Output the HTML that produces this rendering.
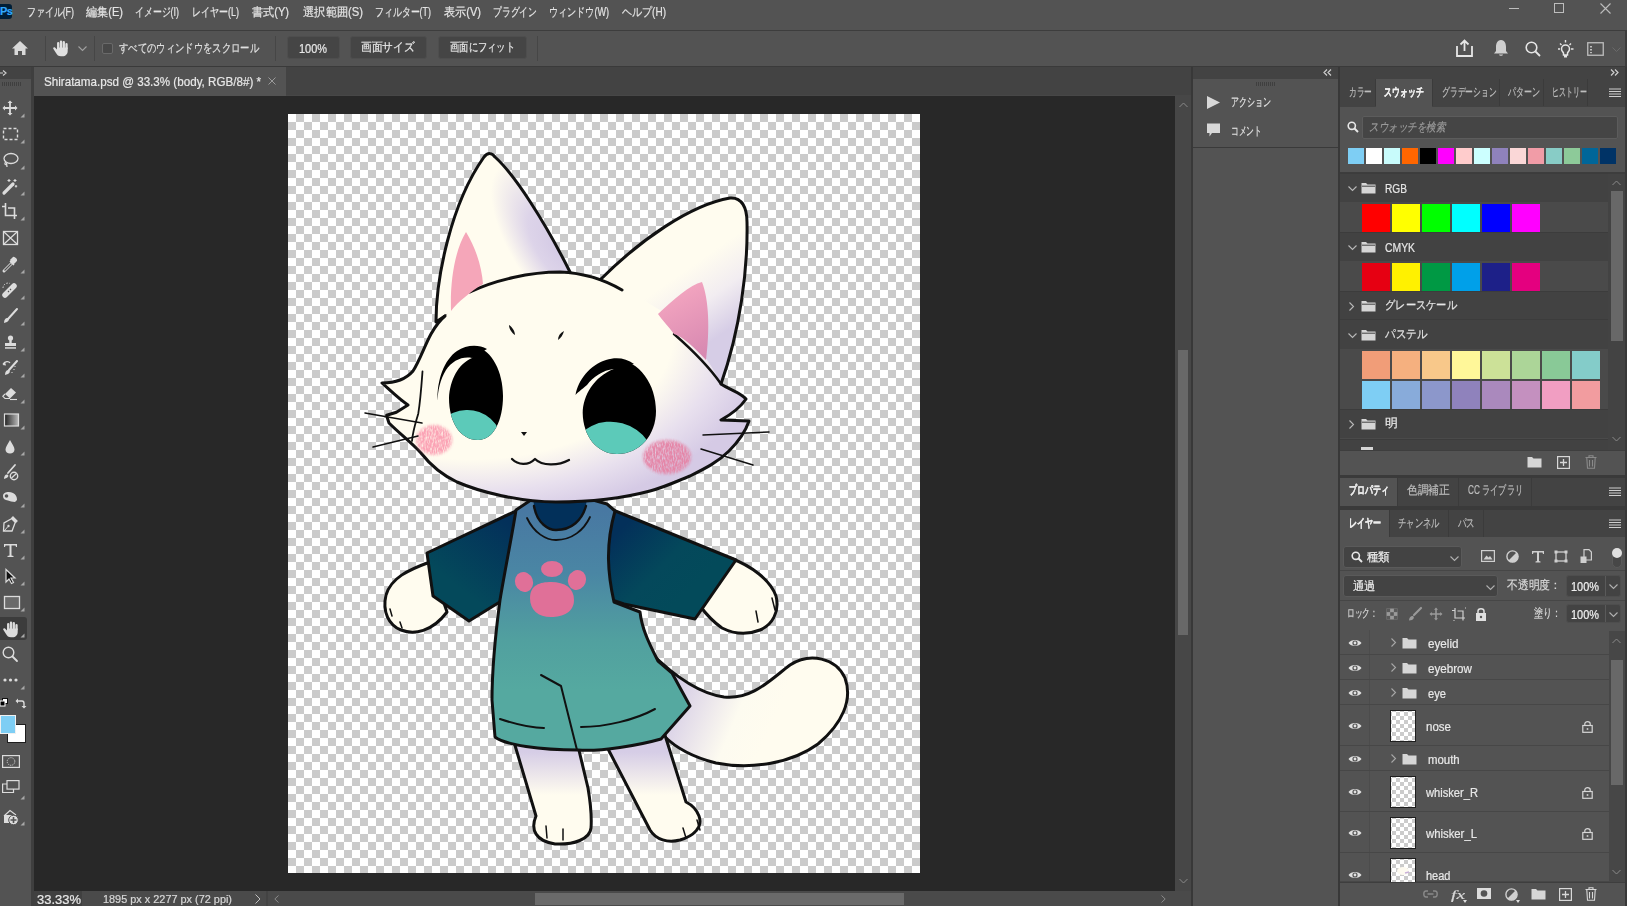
<!DOCTYPE html>
<html><head><meta charset="utf-8">
<style>
*{margin:0;padding:0;box-sizing:border-box}
html,body{width:1627px;height:906px;overflow:hidden;background:#535353;font-family:"Liberation Sans",sans-serif;color:#dcdcdc}
.a{position:absolute}
.t{position:absolute;white-space:nowrap;line-height:1;transform-origin:0 50%;-webkit-text-stroke:0.2px currentColor}
svg{position:absolute;overflow:visible}
</style></head><body>
<div class="a" style="left:0px;top:0px;width:1627px;height:906px;background:#535353;"></div>
<div class="a" style="left:0px;top:30px;width:1627px;height:1px;background:#3d3d3d;"></div>
<div class="a" style="left:1625px;top:31px;width:2px;height:36px;background:#3d3d3d;"></div>
<div class="a" style="left:0px;top:66px;width:1627px;height:1px;background:#3a3a3a;"></div>
<div class="a" style="left:0px;top:67px;width:31px;height:12px;background:#434343;"></div>
<div class="a" style="left:31px;top:67px;width:3px;height:839px;background:#3f3f3f;"></div>
<div class="a" style="left:34px;top:67px;width:1157px;height:29px;background:#434343;"></div>
<div class="a" style="left:34px;top:95px;width:1157px;height:1px;background:#474747;"></div>
<div class="a" style="left:34px;top:67px;width:252px;height:29px;background:#535353;"></div>
<div class="a" style="left:34px;top:96px;width:1141px;height:795px;background:#282828;"></div>
<div class="a" style="left:1175px;top:96px;width:16px;height:795px;background:#474747;"></div>
<div class="a" style="left:1178px;top:350px;width:10px;height:285px;background:#686868;"></div>
<div class="a" style="left:34px;top:891px;width:1157px;height:15px;background:#4a4a4a;"></div>
<div class="a" style="left:34px;top:891px;width:48px;height:15px;background:#404040;"></div>
<div class="a" style="left:266px;top:891px;width:2px;height:15px;background:#434343;"></div>
<div class="a" style="left:535px;top:893px;width:369px;height:12px;background:#6a6a6a;"></div>
<div class="a" style="left:1191px;top:67px;width:2px;height:839px;background:#383838;"></div>
<div class="a" style="left:1193px;top:67px;width:432px;height:12px;background:#434343;"></div>
<div class="a" style="left:1193px;top:147px;width:145px;height:1px;background:#3a3a3a;"></div>
<div class="a" style="left:1338px;top:67px;width:2px;height:839px;background:#383838;"></div>
<div class="a" style="left:1625px;top:67px;width:2px;height:839px;background:#383838;"></div>
<div class="a" style="left:0px;top:4px;width:12px;height:15px;background:#001e36;border-radius:0 3px 3px 0"></div>
<div class="t" style="left:0px;top:6.0px;font-size:11px;color:#31a8ff;font-weight:bold;letter-spacing:-0.5px">Ps</div>
<div class="t" style="left:27px;top:5.5px;font-size:12px;color:#e4e4e4;--w:47;transform:scaleX(0.7422);">ファイル(F)</div>
<div class="t" style="left:86px;top:5.5px;font-size:12px;color:#e4e4e4;--w:37;transform:scaleX(0.9250);">編集(E)</div>
<div class="t" style="left:135px;top:5.5px;font-size:12px;color:#e4e4e4;--w:44;transform:scaleX(0.7416);">イメージ(I)</div>
<div class="t" style="left:192px;top:5.5px;font-size:12px;color:#e4e4e4;--w:47;transform:scaleX(0.7499);">レイヤー(L)</div>
<div class="t" style="left:252px;top:5.5px;font-size:12px;color:#e4e4e4;--w:37;transform:scaleX(0.9250);">書式(Y)</div>
<div class="t" style="left:303px;top:5.5px;font-size:12px;color:#e4e4e4;--w:60;transform:scaleX(0.9375);">選択範囲(S)</div>
<div class="t" style="left:375px;top:5.5px;font-size:12px;color:#e4e4e4;--w:56;transform:scaleX(0.7434);">フィルター(T)</div>
<div class="t" style="left:444px;top:5.5px;font-size:12px;color:#e4e4e4;--w:37;transform:scaleX(0.9250);">表示(V)</div>
<div class="t" style="left:493px;top:5.5px;font-size:12px;color:#e4e4e4;--w:44;transform:scaleX(0.7333);">プラグイン</div>
<div class="t" style="left:549px;top:5.5px;font-size:12px;color:#e4e4e4;--w:60;transform:scaleX(0.7564);">ウィンドウ(W)</div>
<div class="t" style="left:622px;top:5.5px;font-size:12px;color:#e4e4e4;--w:44;transform:scaleX(0.8354);">ヘルプ(H)</div>
<div class="a" style="left:1509px;top:8px;width:10px;height:1px;background:#bdbdbd;"></div>
<div class="a" style="left:1554px;top:3px;width:10px;height:10px;background:transparent;border:1px solid #bdbdbd"></div>
<svg style="left:1600px;top:3px" width="11" height="11" viewBox="0 0 11 11"><path d="M0.5,0.5 L10.5,10.5 M10.5,0.5 L0.5,10.5" stroke="#bdbdbd" stroke-width="1.1"/></svg>
<svg style="left:11px;top:40px" width="18" height="16" viewBox="0 0 18 16"><path d="M9,1 L1,8.5 L3.5,8.5 L3.5,15 L7,15 L7,11 L11,11 L11,15 L14.5,15 L14.5,8.5 L17,8.5 Z" fill="#d9d9d9"/></svg>
<div class="a" style="left:45px;top:36px;width:1px;height:25px;background:#464646;"></div>
<svg style="left:52px;top:39px" width="18" height="18" viewBox="0 0 18 18"><g fill="none" stroke="#e0e0e0" stroke-width="2.3" stroke-linecap="round"><path d="M6.2,9 L6.2,4.2 M9,8.5 L9,2.6 M11.8,8.5 L11.8,3.2 M14.5,9.5 L14.5,5.2"/></g><path d="M5,8.5 L15.7,8.5 L15.7,12 C15.7,15.2 13.5,17.3 10.5,17.3 L9,17.3 C6.5,17.3 5,16 4,14 L1.3,9.8 C0.7,8.8 1.9,7.8 3,8.6 L5,10.5 Z" fill="#e0e0e0"/></svg>
<svg style="left:78px;top:46px" width="9" height="6" viewBox="0 0 9 6"><path d="M0.5,0.5 L4.5,4.5 L8.5,0.5" fill="none" stroke="#a0a0a0" stroke-width="1.1"/></svg>
<div class="a" style="left:94px;top:36px;width:1px;height:25px;background:#464646;"></div>
<div class="a" style="left:102px;top:43px;width:11px;height:11px;background:#484848;border:1px solid #6a6a6a;border-radius:2px"></div>
<div class="t" style="left:119px;top:41.5px;font-size:12px;color:#e0e0e0;--w:140;transform:scaleX(0.7778);">すべてのウィンドウをスクロール</div>
<div class="a" style="left:275px;top:36px;width:1px;height:25px;background:#464646;"></div>
<div class="a" style="left:287px;top:36px;width:53px;height:23px;background:#454545;border:1px solid #4e4e4e;border-radius:3px"></div>
<div class="t" style="left:299px;top:42.5px;font-size:12px;color:#e8e8e8;--w:28;transform:scaleX(0.9120);">100%</div>
<div class="a" style="left:350px;top:36px;width:77px;height:23px;background:#454545;border:1px solid #4e4e4e;border-radius:3px"></div>
<div class="t" style="left:361px;top:41.0px;font-size:12px;color:#e8e8e8;--w:53.5;transform:scaleX(0.8917);">画面サイズ</div>
<div class="a" style="left:438px;top:36px;width:89px;height:23px;background:#454545;border:1px solid #4e4e4e;border-radius:3px"></div>
<div class="t" style="left:449.5px;top:41.0px;font-size:12px;color:#e8e8e8;--w:65;transform:scaleX(0.7738);">画面にフィット</div>
<div class="a" style="left:537px;top:36px;width:1px;height:25px;background:#464646;"></div>
<svg style="left:1455px;top:38px" width="20" height="20" viewBox="0 0 20 20"><path d="M2,8 L2,18 L17,18 L17,8 M9.5,13 L9.5,2.5 M5.5,6.5 L9.5,2.5 L13.5,6.5" fill="none" stroke="#e6e6e6" stroke-width="1.8"/></svg>
<svg style="left:1493px;top:39px" width="16" height="18" viewBox="0 0 16 18"><path d="M8,1 C4,1 3,5 3,8 L3,12 L1,14.5 L15,14.5 L13,12 L13,8 C13,5 12,1 8,1 Z M6,15.5 C6,17.2 10,17.2 10,15.5 Z" fill="#cfcfcf"/></svg>
<svg style="left:1525px;top:41px" width="16" height="16" viewBox="0 0 16 16"><circle cx="6.5" cy="6.5" r="5.3" fill="none" stroke="#e6e6e6" stroke-width="1.6"/><path d="M10.5,10.5 L15,15" stroke="#e6e6e6" stroke-width="1.8"/></svg>
<svg style="left:1556px;top:39px" width="19" height="19" viewBox="0 0 19 19"><path d="M9.5,6 C7,6 5.5,8 5.5,10 C5.5,12 7,13 7.5,14 L7.5,16 L11.5,16 L11.5,14 C12,13 13.5,12 13.5,10 C13.5,8 12,6 9.5,6 Z" fill="none" stroke="#e6e6e6" stroke-width="1.5"/><path d="M9.5,1 L9.5,3.5 M2,10 L4,10 M15,10 L17.5,10 M4,4.5 L5.5,6 M15,4.5 L13.5,6" stroke="#e6e6e6" stroke-width="1.4"/><rect x="8" y="16" width="3" height="2.5" fill="#e6e6e6"/></svg>
<svg style="left:1587px;top:42px" width="18" height="15" viewBox="0 0 18 15"><rect x="0.75" y="0.75" width="15.5" height="12.5" fill="none" stroke="#bdbdbd" stroke-width="1.3"/><rect x="3" y="4" width="2" height="1.5" fill="#bdbdbd"/><rect x="3" y="7" width="2" height="1.5" fill="#bdbdbd"/><rect x="3" y="10" width="2" height="1.2" fill="#bdbdbd"/></svg>
<svg style="left:1612px;top:47px" width="9" height="6" viewBox="0 0 9 6"><path d="M0.5,0.5 L4.5,4.5 L8.5,0.5" fill="none" stroke="#6a6a6a" stroke-width="1"/></svg>
<div class="t" style="left:44px;top:75.0px;font-size:13px;color:#e8e8e8;--w:217;transform:scaleX(0.8940);">Shiratama.psd @ 33.3% (body, RGB/8#) *</div>
<svg style="left:268px;top:77px" width="8" height="8" viewBox="0 0 8 8"><path d="M0.5,0.5 L7.5,7.5 M7.5,0.5 L0.5,7.5" stroke="#9a9a9a" stroke-width="1"/></svg>
<svg style="left:0px;top:69px" width="8" height="8" viewBox="0 0 8 8"><path d="M0,4 L3,4 M3,1.5 L6,4 L3,6.5" fill="none" stroke="#cfcfcf" stroke-width="1.2"/></svg>
<div class="a" style="left:2px;top:82px;width:19px;height:4px;background:repeating-linear-gradient(90deg,#3f3f3f 0 1px,transparent 1px 2px);"></div>
<div class="t" style="left:37px;top:893.5px;font-size:12px;color:#e8e8e8;--w:44;transform:scaleX(1.0810);">33.33%</div>
<div class="t" style="left:103px;top:894.0px;font-size:11px;color:#d8d8d8;--w:129;transform:scaleX(0.9903);">1895 px x 2277 px (72 ppi)</div>
<svg style="left:255px;top:894px" width="6" height="10" viewBox="0 0 6 10"><path d="M0.5,0.5 L5,5 L0.5,9.5" fill="none" stroke="#c0c0c0" stroke-width="1"/></svg>
<svg style="left:274px;top:895px" width="5" height="8" viewBox="0 0 5 8"><path d="M4.5,0.5 L0.8,4 L4.5,7.5" fill="none" stroke="#8a8a8a" stroke-width="1"/></svg>
<svg style="left:1161px;top:895px" width="5" height="8" viewBox="0 0 5 8"><path d="M0.5,0.5 L4.2,4 L0.5,7.5" fill="none" stroke="#8a8a8a" stroke-width="1"/></svg>
<svg style="left:1179px;top:102px" width="9" height="6" viewBox="0 0 9 6"><path d="M0.5,5 L4.5,1 L8.5,5" fill="none" stroke="#8a8a8a" stroke-width="1"/></svg>
<svg style="left:1179px;top:878px" width="9" height="6" viewBox="0 0 9 6"><path d="M0.5,1 L4.5,5 L8.5,1" fill="none" stroke="#8a8a8a" stroke-width="1"/></svg>
<div class="a" style="left:0px;top:617px;width:27px;height:23px;background:#3c3c3c;border-radius:0 3px 3px 0"></div>
<svg style="left:2px;top:100px" width="18" height="18" viewBox="0 0 18 18"><path d="M8,0.5 L10.5,3 L8.9,3 L8.9,7.1 L13,7.1 L13,5.5 L15.5,8 L13,10.5 L13,8.9 L8.9,8.9 L8.9,13 L10.5,13 L8,15.5 L5.5,13 L7.1,13 L7.1,8.9 L3,8.9 L3,10.5 L0.5,8 L3,5.5 L3,7.1 L7.1,7.1 L7.1,3 L5.5,3 Z" fill="#dcdcdc"/></svg>
<svg style="left:20px;top:113px" width="5" height="5" viewBox="0 0 5 5"><path d="M4.5,0.5 L4.5,4.5 L0.5,4.5 Z" fill="#a8a8a8"/></svg>
<svg style="left:2px;top:126px" width="18" height="18" viewBox="0 0 18 18"><rect x="1.5" y="2.5" width="14" height="11" fill="none" stroke="#dcdcdc" stroke-width="1.4" stroke-dasharray="3 2"/></svg>
<svg style="left:20px;top:139px" width="5" height="5" viewBox="0 0 5 5"><path d="M4.5,0.5 L4.5,4.5 L0.5,4.5 Z" fill="#a8a8a8"/></svg>
<svg style="left:2px;top:152px" width="18" height="18" viewBox="0 0 18 18"><ellipse cx="9" cy="6.5" rx="7" ry="5" fill="none" stroke="#dcdcdc" stroke-width="1.3"/><path d="M4,10 C2,11 3,14 5,12 M4.5,11 L5,15" fill="none" stroke="#dcdcdc" stroke-width="1.3"/></svg>
<svg style="left:20px;top:165px" width="5" height="5" viewBox="0 0 5 5"><path d="M4.5,0.5 L4.5,4.5 L0.5,4.5 Z" fill="#a8a8a8"/></svg>
<svg style="left:2px;top:178px" width="18" height="18" viewBox="0 0 18 18"><path d="M2,15 L11,6" stroke="#dcdcdc" stroke-width="3.2" stroke-linecap="round"/><path d="M7,1 L7,4 M5.5,2.5 L8.5,2.5 M13,1 L13,4 M11.5,2.5 L14.5,2.5 M14,7 L14,9.5 M12.8,8.2 L15.2,8.2" stroke="#dcdcdc" stroke-width="1.1"/></svg>
<svg style="left:20px;top:191px" width="5" height="5" viewBox="0 0 5 5"><path d="M4.5,0.5 L4.5,4.5 L0.5,4.5 Z" fill="#a8a8a8"/></svg>
<svg style="left:2px;top:203px" width="18" height="18" viewBox="0 0 18 18"><path d="M0,3.5 L3.5,3.5 M3.5,0 L3.5,12.5 L15,12.5 M12.5,16 L12.5,5 L6,5" fill="none" stroke="#dcdcdc" stroke-width="1.6"/></svg>
<svg style="left:20px;top:216px" width="5" height="5" viewBox="0 0 5 5"><path d="M4.5,0.5 L4.5,4.5 L0.5,4.5 Z" fill="#a8a8a8"/></svg>
<svg style="left:2px;top:230px" width="18" height="18" viewBox="0 0 18 18"><rect x="1.5" y="1.5" width="14" height="13" fill="none" stroke="#dcdcdc" stroke-width="1.3"/><path d="M1.5,1.5 L15.5,14.5 M15.5,1.5 L1.5,14.5" stroke="#dcdcdc" stroke-width="1.2"/></svg>
<svg style="left:2px;top:256px" width="18" height="18" viewBox="0 0 18 18"><path d="M2,15 L10,7" stroke="#dcdcdc" stroke-width="3" stroke-linecap="round" fill="none"/><path d="M2.5,14.5 L9.5,7.5" stroke="#535353" stroke-width="1.2"/><path d="M8,5 L12,9 M11,2 C12,0.5 15.5,4 14,5 L12,7 L9,4 Z" fill="#dcdcdc" stroke="#dcdcdc" stroke-width="1.5"/></svg>
<svg style="left:20px;top:269px" width="5" height="5" viewBox="0 0 5 5"><path d="M4.5,0.5 L4.5,4.5 L0.5,4.5 Z" fill="#a8a8a8"/></svg>
<svg style="left:2px;top:282px" width="18" height="18" viewBox="0 0 18 18"><path d="M3,13 L12,4" stroke="#dcdcdc" stroke-width="5.5" stroke-linecap="round"/><path d="M6,9 L7,10 M8,7 L9,8" stroke="#535353" stroke-width="1.2"/><path d="M1,6 A5,5 0 0 1 8,1.5" fill="none" stroke="#dcdcdc" stroke-width="1" stroke-dasharray="1.5 1.5"/></svg>
<svg style="left:20px;top:295px" width="5" height="5" viewBox="0 0 5 5"><path d="M4.5,0.5 L4.5,4.5 L0.5,4.5 Z" fill="#a8a8a8"/></svg>
<svg style="left:2px;top:308px" width="18" height="18" viewBox="0 0 18 18"><path d="M15,1 L6,11" stroke="#dcdcdc" stroke-width="2" stroke-linecap="round"/><path d="M2,15 C2,11 4,9.5 6,10 C7.5,11 7,13 5,14 Z" fill="#dcdcdc"/></svg>
<svg style="left:20px;top:321px" width="5" height="5" viewBox="0 0 5 5"><path d="M4.5,0.5 L4.5,4.5 L0.5,4.5 Z" fill="#a8a8a8"/></svg>
<svg style="left:2px;top:334px" width="18" height="18" viewBox="0 0 18 18"><circle cx="8.5" cy="4" r="2.6" fill="#dcdcdc"/><path d="M7.3,6 L9.7,6 L9.7,9 L14,9 L14,12 L3,12 L3,9 L7.3,9 Z" fill="#dcdcdc"/><rect x="3" y="13.2" width="11" height="1.5" fill="#dcdcdc"/></svg>
<svg style="left:20px;top:347px" width="5" height="5" viewBox="0 0 5 5"><path d="M4.5,0.5 L4.5,4.5 L0.5,4.5 Z" fill="#a8a8a8"/></svg>
<svg style="left:2px;top:360px" width="18" height="18" viewBox="0 0 18 18"><path d="M15,1 L7,10" stroke="#dcdcdc" stroke-width="2" stroke-linecap="round"/><path d="M3,15 C3,11 5,9.5 7,10 C8.5,11 8,13 6,14 Z" fill="#dcdcdc"/><path d="M1,4 C3,1 7,1 8,3" fill="none" stroke="#dcdcdc" stroke-width="1.1"/><path d="M0.5,5 L3,2 L4,5.5 Z" fill="#dcdcdc"/><path d="M13,6 L13,7 M12,9 L12,10 M10,12 L10,13" stroke="#dcdcdc" stroke-width="1"/></svg>
<svg style="left:20px;top:373px" width="5" height="5" viewBox="0 0 5 5"><path d="M4.5,0.5 L4.5,4.5 L0.5,4.5 Z" fill="#a8a8a8"/></svg>
<svg style="left:2px;top:386px" width="18" height="18" viewBox="0 0 18 18"><path d="M9,2 L14,6.5 L8,12.5 L3,8 Z" fill="#dcdcdc"/><path d="M3,8 L0.8,10.3 L3,12.5 L8,12.5" fill="none" stroke="#dcdcdc" stroke-width="1.1"/><path d="M8,13.5 L15,13.5" stroke="#dcdcdc" stroke-width="1.1"/></svg>
<svg style="left:20px;top:399px" width="5" height="5" viewBox="0 0 5 5"><path d="M4.5,0.5 L4.5,4.5 L0.5,4.5 Z" fill="#a8a8a8"/></svg>
<svg style="left:2px;top:412px" width="18" height="18" viewBox="0 0 18 18"><defs><linearGradient id="tg" x1="0" x2="1"><stop offset="0" stop-color="#222"/><stop offset="1" stop-color="#bbb"/></linearGradient></defs><rect x="2.5" y="2" width="14" height="12" fill="url(#tg)" stroke="#dcdcdc" stroke-width="1.2"/></svg>
<svg style="left:20px;top:425px" width="5" height="5" viewBox="0 0 5 5"><path d="M4.5,0.5 L4.5,4.5 L0.5,4.5 Z" fill="#a8a8a8"/></svg>
<svg style="left:2px;top:438px" width="18" height="18" viewBox="0 0 18 18"><path d="M8,2 C6,6 3.5,9 3.5,11.5 C3.5,14 5.5,15.5 8,15.5 C10.5,15.5 12.5,14 12.5,11.5 C12.5,9 10,6 8,2 Z" fill="#dcdcdc"/></svg>
<svg style="left:20px;top:451px" width="5" height="5" viewBox="0 0 5 5"><path d="M4.5,0.5 L4.5,4.5 L0.5,4.5 Z" fill="#a8a8a8"/></svg>
<svg style="left:2px;top:464px" width="18" height="18" viewBox="0 0 18 18"><path d="M13,1 L6,9" stroke="#dcdcdc" stroke-width="1.8" stroke-linecap="round"/><path d="M2,15 C2,12 3.5,10 5.5,10.5 C7,11.5 6.5,13 4.5,14 Z" fill="#dcdcdc"/><circle cx="12" cy="12" r="3.7" fill="none" stroke="#dcdcdc" stroke-width="1.4"/><path d="M9.5,14 L14.5,9.5" stroke="#dcdcdc" stroke-width="1.3"/></svg>
<svg style="left:2px;top:490px" width="18" height="18" viewBox="0 0 18 18"><path d="M1,6 C1,2 7,1 11,3 C14,4.5 15,7 15,10 L13,12 C10,12 8,11 6,10.5 C3,10 1,9 1,6 Z" fill="#dcdcdc"/><circle cx="4.5" cy="6" r="1.8" fill="#535353"/></svg>
<svg style="left:20px;top:503px" width="5" height="5" viewBox="0 0 5 5"><path d="M4.5,0.5 L4.5,4.5 L0.5,4.5 Z" fill="#a8a8a8"/></svg>
<svg style="left:2px;top:516px" width="18" height="18" viewBox="0 0 18 18"><path d="M11,1 L15,5 L13,7 L10,15 L1.5,15 L2,7 L9,3 Z" fill="none" stroke="#dcdcdc" stroke-width="1.3"/><path d="M11,1 L15,5 L13,7 L9,3 Z" fill="#dcdcdc"/><circle cx="6.5" cy="10" r="1.2" fill="#dcdcdc"/><path d="M2,15 L6,10.5" stroke="#dcdcdc" stroke-width="1"/></svg>
<svg style="left:20px;top:529px" width="5" height="5" viewBox="0 0 5 5"><path d="M4.5,0.5 L4.5,4.5 L0.5,4.5 Z" fill="#a8a8a8"/></svg>
<svg style="left:2px;top:542px" width="18" height="18" viewBox="0 0 18 18"><path d="M2,2 L15,2 L15,5 L14,5 L13.5,3.5 L9.5,3.5 L9.5,13.5 L11.5,14 L11.5,15 L5.5,15 L5.5,14 L7.5,13.5 L7.5,3.5 L3.5,3.5 L3,5 L2,5 Z" fill="#dcdcdc"/></svg>
<svg style="left:20px;top:555px" width="5" height="5" viewBox="0 0 5 5"><path d="M4.5,0.5 L4.5,4.5 L0.5,4.5 Z" fill="#a8a8a8"/></svg>
<svg style="left:2px;top:568px" width="18" height="18" viewBox="0 0 18 18"><path d="M4,1.5 L4,14 L7,11 L9.5,15.5 L11.5,14.5 L9,10 L13,10 Z" fill="#111" stroke="#dcdcdc" stroke-width="1.2"/></svg>
<svg style="left:20px;top:581px" width="5" height="5" viewBox="0 0 5 5"><path d="M4.5,0.5 L4.5,4.5 L0.5,4.5 Z" fill="#a8a8a8"/></svg>
<svg style="left:2px;top:594px" width="18" height="18" viewBox="0 0 18 18"><rect x="2.5" y="2.5" width="15" height="12" fill="#6a6a6a" stroke="#dcdcdc" stroke-width="1.3"/></svg>
<svg style="left:20px;top:607px" width="5" height="5" viewBox="0 0 5 5"><path d="M4.5,0.5 L4.5,4.5 L0.5,4.5 Z" fill="#a8a8a8"/></svg>
<svg style="left:2px;top:620px" width="18" height="18" viewBox="0 0 18 18"><g fill="none" stroke="#dcdcdc" stroke-width="2.3" stroke-linecap="round"><path d="M6.2,9 L6.2,4.2 M9,8.5 L9,2.6 M11.8,8.5 L11.8,3.2 M14.5,9.5 L14.5,5.2"/></g><path d="M5,8.5 L15.7,8.5 L15.7,12 C15.7,15.2 13.5,17.3 10.5,17.3 L9,17.3 C6.5,17.3 5,16 4,14 L1.3,9.8 C0.7,8.8 1.9,7.8 3,8.6 L5,10.5 Z" fill="#dcdcdc"/></svg>
<svg style="left:20px;top:633px" width="5" height="5" viewBox="0 0 5 5"><path d="M4.5,0.5 L4.5,4.5 L0.5,4.5 Z" fill="#a8a8a8"/></svg>
<svg style="left:2px;top:646px" width="18" height="18" viewBox="0 0 18 18"><circle cx="6.5" cy="6.5" r="5.3" fill="none" stroke="#dcdcdc" stroke-width="1.4"/><path d="M10.5,10.5 L15,15" stroke="#dcdcdc" stroke-width="1.8" stroke-linecap="round"/></svg>
<svg style="left:2px;top:672px" width="18" height="18" viewBox="0 0 18 18"><circle cx="3" cy="8" r="1.6" fill="#dcdcdc"/><circle cx="8.5" cy="8" r="1.6" fill="#dcdcdc"/><circle cx="14" cy="8" r="1.6" fill="#dcdcdc"/></svg>
<svg style="left:20px;top:685px" width="5" height="5" viewBox="0 0 5 5"><path d="M4.5,0.5 L4.5,4.5 L0.5,4.5 Z" fill="#a8a8a8"/></svg>
<svg style="left:0px;top:698px" width="8" height="9" viewBox="0 0 8 9"><rect x="2.5" y="0.5" width="5" height="5" fill="#fff" stroke="#111" stroke-width="1"/><rect x="0" y="3" width="5" height="5" fill="#000" stroke="#fff" stroke-width="1"/></svg>
<svg style="left:15px;top:698px" width="11" height="11" viewBox="0 0 11 11"><path d="M2,3 L7,3 C8.5,3 9,4 9,5.5 L9,9" fill="none" stroke="#dcdcdc" stroke-width="1.4"/><path d="M0.5,3 L3,0.5 L3,5.5 Z M9,10.5 L6.5,8 L11.5,8 Z" fill="#dcdcdc"/></svg>
<div class="a" style="left:7px;top:724px;width:19px;height:19px;background:#ffffff;border:1px solid #1e1e1e"></div>
<div class="a" style="left:0px;top:715px;width:16px;height:19px;background:#7ecef4;border:1px solid #f0f0f0"></div>
<svg style="left:2px;top:755px" width="18" height="13" viewBox="0 0 18 13"><rect x="0.6" y="0.6" width="16.8" height="11.8" fill="none" stroke="#dcdcdc" stroke-width="1.2"/><circle cx="9" cy="6.5" r="3.8" fill="none" stroke="#dcdcdc" stroke-width="1" stroke-dasharray="1 1"/></svg>
<svg style="left:2px;top:780px" width="18" height="14" viewBox="0 0 18 14"><rect x="5" y="0.6" width="12" height="8.5" fill="#535353" stroke="#dcdcdc" stroke-width="1.2"/><path d="M5,4 L0.6,4 L0.6,12.5 L11.5,12.5 L11.5,9" fill="none" stroke="#dcdcdc" stroke-width="1.2"/></svg>
<svg style="left:20px;top:795px" width="5" height="5" viewBox="0 0 5 5"><path d="M4.5,0.5 L4.5,4.5 L0.5,4.5 Z" fill="#a8a8a8"/></svg>
<svg style="left:3px;top:809px" width="16" height="16" viewBox="0 0 16 16"><path d="M1,7 L7,1.5 L13,6" fill="none" stroke="#dcdcdc" stroke-width="1.1"/><rect x="1" y="6" width="8" height="8" fill="#dcdcdc"/><circle cx="10.5" cy="11" r="4.8" fill="#dcdcdc" stroke="#535353" stroke-width="1"/><path d="M10.5,8 L10.5,14 M7.5,11 L13.5,11" stroke="#535353" stroke-width="1.6"/></svg>
<svg style="left:20px;top:821px" width="5" height="5" viewBox="0 0 5 5"><path d="M4.5,0.5 L4.5,4.5 L0.5,4.5 Z" fill="#a8a8a8"/></svg>
<svg style="left:1323px;top:69px" width="9" height="7" viewBox="0 0 9 7"><path d="M4,0.5 L1,3.5 L4,6.5 M8,0.5 L5,3.5 L8,6.5" fill="none" stroke="#cfcfcf" stroke-width="1.2"/></svg>
<svg style="left:1610px;top:69px" width="9" height="7" viewBox="0 0 9 7"><path d="M1,0.5 L4,3.5 L1,6.5 M5,0.5 L8,3.5 L5,6.5" fill="none" stroke="#cfcfcf" stroke-width="1.2"/></svg>
<div class="a" style="left:1256px;top:82px;width:19px;height:4px;background:repeating-linear-gradient(90deg,#3f3f3f 0 1px,transparent 1px 2px);"></div>
<svg style="left:1206px;top:95px" width="15" height="15" viewBox="0 0 15 15"><path d="M1,1 L14,7.5 L1,14 Z" fill="#d8d8d8"/></svg>
<div class="t" style="left:1231px;top:96.0px;font-size:12px;color:#e2e2e2;--w:40;transform:scaleX(0.6667);">アクション</div>
<svg style="left:1206px;top:123px" width="15" height="15" viewBox="0 0 15 15"><path d="M1,0.5 L14,0.5 L14,10 L6,10 L3.5,13.5 L3.5,10 L1,10 Z" fill="#d8d8d8"/></svg>
<div class="t" style="left:1231px;top:124.5px;font-size:12px;color:#e2e2e2;--w:31;transform:scaleX(0.6458);">コメント</div>
<div class="a" style="left:1340px;top:79px;width:285px;height:28px;background:#434343;"></div>
<div class="a" style="left:1376px;top:79px;width:56px;height:28px;background:#535353;"></div>
<div class="a" style="left:1432px;top:79px;width:1px;height:27px;background:#3b3b3b;"></div>
<div class="a" style="left:1499px;top:79px;width:1px;height:27px;background:#3b3b3b;"></div>
<div class="a" style="left:1543px;top:79px;width:1px;height:27px;background:#3b3b3b;"></div>
<div class="a" style="left:1587px;top:79px;width:1px;height:27px;background:#3b3b3b;"></div>
<div class="a" style="left:1375px;top:79px;width:1px;height:27px;background:#3b3b3b;"></div>
<div class="t" style="left:1349px;top:85.5px;font-size:12px;color:#bdbdbd;--w:23;transform:scaleX(0.6389);">カラー</div>
<div class="t" style="left:1383.5px;top:85.5px;font-size:12px;color:#f0f0f0;--w:39.5;transform:scaleX(0.6583);font-weight:bold">スウォッチ</div>
<div class="t" style="left:1441.5px;top:85.5px;font-size:12px;color:#bdbdbd;--w:54.5;transform:scaleX(0.6488);">グラデーション</div>
<div class="t" style="left:1508px;top:85.5px;font-size:12px;color:#bdbdbd;--w:32;transform:scaleX(0.6667);">パターン</div>
<div class="t" style="left:1552px;top:85.5px;font-size:12px;color:#bdbdbd;--w:35;transform:scaleX(0.5833);">ヒストリー</div>
<svg style="left:1609px;top:88px" width="12" height="9" viewBox="0 0 12 9"><path d="M0,1 L12,1 M0,3.5 L12,3.5 M0,6 L12,6 M0,8.5 L12,8.5" stroke="#cfcfcf" stroke-width="1"/></svg>
<svg style="left:1347px;top:121px" width="12" height="12" viewBox="0 0 12 12"><circle cx="4.8" cy="4.8" r="3.6" fill="none" stroke="#e8e8e8" stroke-width="1.6"/><path d="M7.5,7.5 L11,11" stroke="#e8e8e8" stroke-width="2"/></svg>
<div class="a" style="left:1362px;top:116px;width:256px;height:23px;background:#454545;border:1px solid #5c5c5c;border-radius:2px"></div>
<div class="t" style="left:1369px;top:120.5px;font-size:12px;color:#9a9a9a;--w:76;transform:scaleX(0.7917);font-style:italic">スウォッチを検索</div>
<div class="a" style="left:1348px;top:148px;width:16px;height:16px;background:#7ecef4;"></div>
<div class="a" style="left:1366px;top:148px;width:16px;height:16px;background:#ffffff;"></div>
<div class="a" style="left:1384px;top:148px;width:16px;height:16px;background:#c8fbfb;"></div>
<div class="a" style="left:1402px;top:148px;width:16px;height:16px;background:#ff6600;"></div>
<div class="a" style="left:1420px;top:148px;width:16px;height:16px;background:#000000;"></div>
<div class="a" style="left:1438px;top:148px;width:16px;height:16px;background:#ff00ff;"></div>
<div class="a" style="left:1456px;top:148px;width:16px;height:16px;background:#ffcccc;"></div>
<div class="a" style="left:1474px;top:148px;width:16px;height:16px;background:#ccffff;"></div>
<div class="a" style="left:1492px;top:148px;width:16px;height:16px;background:#8f82bc;"></div>
<div class="a" style="left:1510px;top:148px;width:16px;height:16px;background:#fad7d7;"></div>
<div class="a" style="left:1528px;top:148px;width:16px;height:16px;background:#f19ca7;"></div>
<div class="a" style="left:1546px;top:148px;width:16px;height:16px;background:#88ccc6;"></div>
<div class="a" style="left:1564px;top:148px;width:16px;height:16px;background:#8dca99;"></div>
<div class="a" style="left:1582px;top:148px;width:16px;height:16px;background:#006699;"></div>
<div class="a" style="left:1600px;top:148px;width:16px;height:16px;background:#003366;"></div>
<div class="a" style="left:1340px;top:172px;width:268px;height:278px;background:#4a4a4a;"></div>
<div class="a" style="left:1340px;top:172px;width:285px;height:2px;background:#3d3d3d;"></div>
<div class="a" style="left:1608px;top:174px;width:17px;height:276px;background:#434343;"></div>
<div class="a" style="left:1611px;top:191px;width:12px;height:150px;background:#686868;"></div>
<svg style="left:1612px;top:180px" width="9" height="6" viewBox="0 0 9 6"><path d="M0.5,5 L4.5,1 L8.5,5" fill="none" stroke="#8a8a8a" stroke-width="1"/></svg>
<svg style="left:1612px;top:436px" width="9" height="6" viewBox="0 0 9 6"><path d="M0.5,1 L4.5,5 L8.5,1" fill="none" stroke="#8a8a8a" stroke-width="1"/></svg>
<div class="a" style="left:1340px;top:174px;width:268px;height:28px;background:#424242;"></div>
<div class="a" style="left:1340px;top:173px;width:268px;height:1px;background:#3c3c3c;"></div>
<svg style="left:1348px;top:186.0px" width="9" height="6" viewBox="0 0 9 6"><path d="M0.5,0.5 L4.5,4.5 L8.5,0.5" fill="none" stroke="#b8b8b8" stroke-width="1.1"/></svg>
<svg style="left:1361px;top:182.0px" width="15" height="12" viewBox="0 0 15 12"><path d="M0.5,11.5 L0.5,1 L5,1 L6.5,2.5 L14.5,2.5 L14.5,11.5 Z" fill="#d6d6d6"/><path d="M1,4.2 L14,4.2" stroke="#434343" stroke-width="1"/></svg>
<div class="t" style="left:1385px;top:182.5px;font-size:12px;color:#e6e6e6;--w:22;transform:scaleX(0.8456);">RGB</div>
<div class="a" style="left:1340px;top:233px;width:268px;height:28px;background:#424242;"></div>
<div class="a" style="left:1340px;top:232px;width:268px;height:1px;background:#3c3c3c;"></div>
<svg style="left:1348px;top:245.0px" width="9" height="6" viewBox="0 0 9 6"><path d="M0.5,0.5 L4.5,4.5 L8.5,0.5" fill="none" stroke="#b8b8b8" stroke-width="1.1"/></svg>
<svg style="left:1361px;top:241.0px" width="15" height="12" viewBox="0 0 15 12"><path d="M0.5,11.5 L0.5,1 L5,1 L6.5,2.5 L14.5,2.5 L14.5,11.5 Z" fill="#d6d6d6"/><path d="M1,4.2 L14,4.2" stroke="#434343" stroke-width="1"/></svg>
<div class="t" style="left:1385px;top:241.5px;font-size:12px;color:#e6e6e6;--w:30;transform:scaleX(0.8653);">CMYK</div>
<div class="a" style="left:1340px;top:292px;width:268px;height:28px;background:#424242;"></div>
<div class="a" style="left:1340px;top:291px;width:268px;height:1px;background:#3c3c3c;"></div>
<svg style="left:1349px;top:302.0px" width="6" height="9" viewBox="0 0 6 9"><path d="M0.5,0.5 L4.5,4.5 L0.5,8.5" fill="none" stroke="#b8b8b8" stroke-width="1.1"/></svg>
<svg style="left:1361px;top:300.0px" width="15" height="12" viewBox="0 0 15 12"><path d="M0.5,11.5 L0.5,1 L5,1 L6.5,2.5 L14.5,2.5 L14.5,11.5 Z" fill="#d6d6d6"/><path d="M1,4.2 L14,4.2" stroke="#434343" stroke-width="1"/></svg>
<div class="t" style="left:1385px;top:299.0px;font-size:12px;color:#e6e6e6;--w:72;transform:scaleX(0.8571);">グレースケール</div>
<div class="a" style="left:1340px;top:320px;width:268px;height:29px;background:#424242;"></div>
<div class="a" style="left:1340px;top:319px;width:268px;height:1px;background:#3c3c3c;"></div>
<svg style="left:1348px;top:332.5px" width="9" height="6" viewBox="0 0 9 6"><path d="M0.5,0.5 L4.5,4.5 L8.5,0.5" fill="none" stroke="#b8b8b8" stroke-width="1.1"/></svg>
<svg style="left:1361px;top:328.5px" width="15" height="12" viewBox="0 0 15 12"><path d="M0.5,11.5 L0.5,1 L5,1 L6.5,2.5 L14.5,2.5 L14.5,11.5 Z" fill="#d6d6d6"/><path d="M1,4.2 L14,4.2" stroke="#434343" stroke-width="1"/></svg>
<div class="t" style="left:1385px;top:327.5px;font-size:12px;color:#e6e6e6;--w:42;transform:scaleX(0.8750);">パステル</div>
<div class="a" style="left:1340px;top:410px;width:268px;height:28px;background:#424242;"></div>
<div class="a" style="left:1340px;top:409px;width:268px;height:1px;background:#3c3c3c;"></div>
<svg style="left:1349px;top:420.0px" width="6" height="9" viewBox="0 0 6 9"><path d="M0.5,0.5 L4.5,4.5 L0.5,8.5" fill="none" stroke="#b8b8b8" stroke-width="1.1"/></svg>
<svg style="left:1361px;top:418.0px" width="15" height="12" viewBox="0 0 15 12"><path d="M0.5,11.5 L0.5,1 L5,1 L6.5,2.5 L14.5,2.5 L14.5,11.5 Z" fill="#d6d6d6"/><path d="M1,4.2 L14,4.2" stroke="#434343" stroke-width="1"/></svg>
<div class="t" style="left:1385px;top:417.0px;font-size:12px;color:#e6e6e6;--w:13;transform:scaleX(1.0833);">明</div>
<div class="a" style="left:1340px;top:440px;width:268px;height:10px;background:#424242;"></div>
<div class="a" style="left:1340px;top:439px;width:268px;height:1px;background:#3c3c3c;"></div>
<div class="a" style="left:1362px;top:204px;width:28px;height:28px;background:#ff0000;"></div>
<div class="a" style="left:1392px;top:204px;width:28px;height:28px;background:#ffff00;"></div>
<div class="a" style="left:1422px;top:204px;width:28px;height:28px;background:#00ff00;"></div>
<div class="a" style="left:1452px;top:204px;width:28px;height:28px;background:#00ffff;"></div>
<div class="a" style="left:1482px;top:204px;width:28px;height:28px;background:#0000ff;"></div>
<div class="a" style="left:1512px;top:204px;width:28px;height:28px;background:#ff00ff;"></div>
<div class="a" style="left:1362px;top:263px;width:28px;height:28px;background:#e60012;"></div>
<div class="a" style="left:1392px;top:263px;width:28px;height:28px;background:#fff100;"></div>
<div class="a" style="left:1422px;top:263px;width:28px;height:28px;background:#009944;"></div>
<div class="a" style="left:1452px;top:263px;width:28px;height:28px;background:#00a0e9;"></div>
<div class="a" style="left:1482px;top:263px;width:28px;height:28px;background:#1d2088;"></div>
<div class="a" style="left:1512px;top:263px;width:28px;height:28px;background:#e4007f;"></div>
<div class="a" style="left:1362px;top:351px;width:28px;height:28px;background:#f19d78;"></div>
<div class="a" style="left:1392px;top:351px;width:28px;height:28px;background:#f5b07f;"></div>
<div class="a" style="left:1422px;top:351px;width:28px;height:28px;background:#f8c88a;"></div>
<div class="a" style="left:1452px;top:351px;width:28px;height:28px;background:#fff799;"></div>
<div class="a" style="left:1482px;top:351px;width:28px;height:28px;background:#cce198;"></div>
<div class="a" style="left:1512px;top:351px;width:28px;height:28px;background:#acd598;"></div>
<div class="a" style="left:1542px;top:351px;width:28px;height:28px;background:#89c997;"></div>
<div class="a" style="left:1572px;top:351px;width:28px;height:28px;background:#84ccc9;"></div>
<div class="a" style="left:1362px;top:381px;width:28px;height:28px;background:#7ecef4;"></div>
<div class="a" style="left:1392px;top:381px;width:28px;height:28px;background:#88abda;"></div>
<div class="a" style="left:1422px;top:381px;width:28px;height:28px;background:#8c97cb;"></div>
<div class="a" style="left:1452px;top:381px;width:28px;height:28px;background:#8f82bc;"></div>
<div class="a" style="left:1482px;top:381px;width:28px;height:28px;background:#aa89bd;"></div>
<div class="a" style="left:1512px;top:381px;width:28px;height:28px;background:#c490bf;"></div>
<div class="a" style="left:1542px;top:381px;width:28px;height:28px;background:#f19ec2;"></div>
<div class="a" style="left:1572px;top:381px;width:28px;height:28px;background:#f29c9f;"></div>
<div class="a" style="left:1361px;top:447px;width:12px;height:3px;background:#d6d6d6;"></div>
<div class="a" style="left:1340px;top:450px;width:285px;height:25px;background:#535353;"></div>
<div class="a" style="left:1340px;top:450px;width:285px;height:1px;background:#3e3e3e;"></div>
<svg style="left:1527px;top:456px" width="15" height="12" viewBox="0 0 15 12"><path d="M0.5,11.5 L0.5,1 L5,1 L6.5,2.5 L14.5,2.5 L14.5,11.5 Z" fill="#d6d6d6"/></svg>
<svg style="left:1557px;top:456px" width="13" height="13" viewBox="0 0 13 13"><rect x="0.6" y="0.6" width="11.8" height="11.8" fill="none" stroke="#d8d8d8" stroke-width="1.2"/><path d="M6.5,3 L6.5,10 M3,6.5 L10,6.5" stroke="#d8d8d8" stroke-width="1.3"/></svg>
<svg style="left:1585px;top:455px" width="12" height="14" viewBox="0 0 12 14"><path d="M0.5,2.5 L11.5,2.5 M4,2.5 L4,0.8 L8,0.8 L8,2.5 M1.8,3 L2.5,13.3 L9.5,13.3 L10.2,3 M4.5,5 L4.5,11.5 M7.5,5 L7.5,11.5" fill="none" stroke="#8a8a8a" stroke-width="1.1"/></svg>
<div class="a" style="left:1340px;top:475px;width:285px;height:3px;background:#3a3a3a;"></div>
<div class="a" style="left:1340px;top:478px;width:285px;height:28px;background:#434343;"></div>
<div class="a" style="left:1340px;top:478px;width:57px;height:28px;background:#535353;"></div>
<div class="a" style="left:1397px;top:478px;width:1px;height:28px;background:#3b3b3b;"></div>
<div class="a" style="left:1458px;top:478px;width:1px;height:28px;background:#3b3b3b;"></div>
<div class="a" style="left:1531px;top:478px;width:1px;height:28px;background:#3b3b3b;"></div>
<div class="t" style="left:1349px;top:484.0px;font-size:12px;color:#ececec;--w:40;transform:scaleX(0.6667);font-weight:bold">プロパティ</div>
<div class="t" style="left:1406.5px;top:484.0px;font-size:12px;color:#bdbdbd;--w:43;transform:scaleX(0.8958);">色調補正</div>
<div class="t" style="left:1468px;top:484.0px;font-size:12px;color:#bdbdbd;--w:55;transform:scaleX(0.6818);">CC ライブラリ</div>
<svg style="left:1609px;top:487px" width="12" height="9" viewBox="0 0 12 9"><path d="M0,1 L12,1 M0,3.5 L12,3.5 M0,6 L12,6 M0,8.5 L12,8.5" stroke="#cfcfcf" stroke-width="1"/></svg>
<div class="a" style="left:1340px;top:506px;width:285px;height:4px;background:#3a3a3a;"></div>
<div class="a" style="left:1340px;top:510px;width:285px;height:27px;background:#434343;"></div>
<div class="a" style="left:1340px;top:510px;width:49px;height:27px;background:#535353;"></div>
<div class="a" style="left:1389px;top:510px;width:1px;height:27px;background:#3b3b3b;"></div>
<div class="a" style="left:1448px;top:510px;width:1px;height:27px;background:#3b3b3b;"></div>
<div class="a" style="left:1483px;top:510px;width:1px;height:27px;background:#3b3b3b;"></div>
<div class="t" style="left:1349px;top:516.5px;font-size:12px;color:#ececec;--w:32;transform:scaleX(0.6667);font-weight:bold">レイヤー</div>
<div class="t" style="left:1398px;top:516.5px;font-size:12px;color:#bdbdbd;--w:41.5;transform:scaleX(0.6917);">チャンネル</div>
<div class="t" style="left:1458px;top:516.5px;font-size:12px;color:#bdbdbd;--w:17;transform:scaleX(0.7083);">パス</div>
<svg style="left:1609px;top:519px" width="12" height="9" viewBox="0 0 12 9"><path d="M0,1 L12,1 M0,3.5 L12,3.5 M0,6 L12,6 M0,8.5 L12,8.5" stroke="#cfcfcf" stroke-width="1"/></svg>
<div class="a" style="left:1343px;top:546px;width:119px;height:22px;background:#434343;border:1px solid #5a5a5a;border-radius:3px"></div>
<svg style="left:1351px;top:551px" width="12" height="12" viewBox="0 0 12 12"><circle cx="4.8" cy="4.8" r="3.6" fill="none" stroke="#e8e8e8" stroke-width="1.6"/><path d="M7.5,7.5 L11,11" stroke="#e8e8e8" stroke-width="2"/></svg>
<div class="t" style="left:1366.5px;top:550.5px;font-size:12px;color:#ececec;--w:23;transform:scaleX(0.9583);">種類</div>
<svg style="left:1450px;top:556px" width="9" height="6" viewBox="0 0 9 6"><path d="M0.5,0.5 L4.5,4.5 L8.5,0.5" fill="none" stroke="#b0b0b0" stroke-width="1.1"/></svg>
<svg style="left:1481px;top:550px" width="14" height="12" viewBox="0 0 14 12"><rect x="0.6" y="0.6" width="12.8" height="10.8" fill="none" stroke="#cfcfcf" stroke-width="1.2"/><path d="M2.5,9.5 L5.5,5.5 L7.5,7.5 L9,6 L11.5,9.5 Z" fill="#cfcfcf"/></svg>
<svg style="left:1506px;top:550px" width="13" height="13" viewBox="0 0 13 13"><circle cx="6.5" cy="6.5" r="5.6" fill="none" stroke="#cfcfcf" stroke-width="1.4"/><path d="M10.5,2.5 A5.6,5.6 0 0 1 2.5,10.5 Z" fill="#cfcfcf"/></svg>
<svg style="left:1531px;top:550px" width="14" height="13" viewBox="0 0 14 13"><path d="M1,1 L13,1 L13,4 L12,4 L11.5,2.5 L8,2.5 L8,11 L9.5,11.5 L9.5,12.5 L4.5,12.5 L4.5,11.5 L6,11 L6,2.5 L2.5,2.5 L2,4 L1,4 Z" fill="#cfcfcf"/></svg>
<svg style="left:1554px;top:550px" width="14" height="13" viewBox="0 0 14 13"><rect x="2" y="2" width="10" height="9" fill="none" stroke="#cfcfcf" stroke-width="1.3"/><rect x="0.5" y="0.5" width="3" height="3" fill="#cfcfcf"/><rect x="10.5" y="0.5" width="3" height="3" fill="#cfcfcf"/><rect x="0.5" y="9.5" width="3" height="3" fill="#cfcfcf"/><rect x="10.5" y="9.5" width="3" height="3" fill="#cfcfcf"/></svg>
<svg style="left:1580px;top:549px" width="12" height="15" viewBox="0 0 12 15"><path d="M4,0.6 L9,0.6 L11.4,3 L11.4,11 L4,11 Z" fill="none" stroke="#cfcfcf" stroke-width="1.2"/><rect x="0.5" y="7.5" width="6" height="6.5" fill="#cfcfcf"/></svg>
<div class="a" style="left:1612px;top:548px;width:10px;height:20px;background:#474747;border:1px solid #5a5a5a;border-radius:5px"></div>
<div class="a" style="left:1612px;top:548px;width:10px;height:10px;background:#e0e0e0;border-radius:5px"></div>
<div class="a" style="left:1340px;top:570px;width:285px;height:1px;background:#464646;"></div>
<div class="a" style="left:1343px;top:575px;width:155px;height:22px;background:#434343;border:1px solid #5a5a5a;border-radius:3px"></div>
<div class="t" style="left:1353px;top:579.5px;font-size:12px;color:#ececec;--w:22.5;transform:scaleX(0.9375);">通過</div>
<svg style="left:1486px;top:585px" width="9" height="6" viewBox="0 0 9 6"><path d="M0.5,0.5 L4.5,4.5 L8.5,0.5" fill="none" stroke="#b0b0b0" stroke-width="1.1"/></svg>
<div class="t" style="left:1506.5px;top:578.5px;font-size:12px;color:#d8d8d8;--w:54;transform:scaleX(0.9000);">不透明度：</div>
<div class="a" style="left:1566px;top:575px;width:55px;height:22px;background:#434343;border:1px solid #4e4e4e;border-radius:3px"></div>
<div class="a" style="left:1605px;top:576px;width:1px;height:20px;background:#5a5a5a;"></div>
<div class="t" style="left:1570.5px;top:580.5px;font-size:12px;color:#f0f0f0;--w:28;transform:scaleX(0.9120);">100%</div>
<svg style="left:1609px;top:584px" width="9" height="6" viewBox="0 0 9 6"><path d="M0.5,0.5 L4.5,4.5 L8.5,0.5" fill="none" stroke="#b0b0b0" stroke-width="1.1"/></svg>
<div class="a" style="left:1340px;top:600px;width:285px;height:1px;background:#464646;"></div>
<div class="t" style="left:1347px;top:607.0px;font-size:12px;color:#d8d8d8;--w:31;transform:scaleX(0.6458);">ロック：</div>
<svg style="left:1386px;top:608px" width="12" height="12" viewBox="0 0 12 12"><rect x="0.5" y="0.5" width="11" height="11" fill="#9a9a9a"/><rect x="0.5" y="0.5" width="3.6" height="3.6" fill="#5a5a5a"/><rect x="7.9" y="0.5" width="3.6" height="3.6" fill="#5a5a5a"/><rect x="4.2" y="4.2" width="3.6" height="3.6" fill="#5a5a5a"/><rect x="0.5" y="7.9" width="3.6" height="3.6" fill="#5a5a5a"/><rect x="7.9" y="7.9" width="3.6" height="3.6" fill="#5a5a5a"/></svg>
<svg style="left:1408px;top:607px" width="14" height="14" viewBox="0 0 14 14"><path d="M13,1 L6,8" stroke="#9a9a9a" stroke-width="2.2" stroke-linecap="round"/><path d="M1,13.5 C1,10.5 3,8.5 5,9 C6.5,10 6,12 4,13 Z" fill="#9a9a9a"/></svg>
<svg style="left:1429px;top:607px" width="14" height="14" viewBox="0 0 14 14"><path d="M7,0.5 L9,2.8 L7.8,2.8 L7.8,6.2 L11.2,6.2 L11.2,5 L13.5,7 L11.2,9 L11.2,7.8 L7.8,7.8 L7.8,11.2 L9,11.2 L7,13.5 L5,11.2 L6.2,11.2 L6.2,7.8 L2.8,7.8 L2.8,9 L0.5,7 L2.8,5 L2.8,6.2 L6.2,6.2 L6.2,2.8 L5,2.8 Z" fill="#9a9a9a"/></svg>
<svg style="left:1452px;top:607px" width="15" height="14" viewBox="0 0 15 14"><path d="M0,3.5 L3,3.5 M3,1 L3,11 L13,11 M11,13.5 L11,4 L5.5,4" fill="none" stroke="#d0d0d0" stroke-width="1.2"/><path d="M2,13 L2,14 M13,1 L14,1" stroke="#d0d0d0"/></svg>
<svg style="left:1475px;top:607px" width="12" height="14" viewBox="0 0 12 14"><path d="M3,6 L3,4 C3,1 9,1 9,4 L9,6" fill="none" stroke="#e0e0e0" stroke-width="1.5"/><rect x="1" y="6" width="10" height="8" fill="#e0e0e0"/><circle cx="6" cy="10" r="1.2" fill="#535353"/></svg>
<div class="t" style="left:1534px;top:606.5px;font-size:12px;color:#d8d8d8;--w:27;transform:scaleX(0.7500);">塗り：</div>
<div class="a" style="left:1566px;top:604px;width:55px;height:19px;background:#434343;border:1px solid #4e4e4e;border-radius:3px"></div>
<div class="a" style="left:1605px;top:605px;width:1px;height:17px;background:#5a5a5a;"></div>
<div class="t" style="left:1570.5px;top:608.5px;font-size:12px;color:#f0f0f0;--w:28;transform:scaleX(0.9120);">100%</div>
<svg style="left:1609px;top:612px" width="9" height="6" viewBox="0 0 9 6"><path d="M0.5,0.5 L4.5,4.5 L8.5,0.5" fill="none" stroke="#b0b0b0" stroke-width="1.1"/></svg>
<div class="a" style="left:1340px;top:631px;width:269px;height:251px;background:#535353;"></div>
<div class="a" style="left:1609px;top:631px;width:16px;height:251px;background:#474747;"></div>
<div class="a" style="left:1611px;top:660px;width:12px;height:125px;background:#686868;"></div>
<svg style="left:1612px;top:638px" width="9" height="6" viewBox="0 0 9 6"><path d="M0.5,5 L4.5,1 L8.5,5" fill="none" stroke="#8a8a8a" stroke-width="1"/></svg>
<svg style="left:1612px;top:869px" width="9" height="6" viewBox="0 0 9 6"><path d="M0.5,1 L4.5,5 L8.5,1" fill="none" stroke="#8a8a8a" stroke-width="1"/></svg>
<div class="a" style="left:1340px;top:654px;width:269px;height:1px;background:#474747;"></div>
<div class="a" style="left:1369px;top:630px;width:1px;height:24px;background:#4c4c4c;"></div>
<svg style="left:1348px;top:637.5px" width="14" height="10" viewBox="0 0 14 10"><path d="M0.5,5 C3,1 11,1 13.5,5 C11,9 3,9 0.5,5 Z" fill="#e0e0e0"/><circle cx="7" cy="5" r="2.6" fill="#535353"/><circle cx="7" cy="5" r="1.4" fill="#e0e0e0"/></svg>
<svg style="left:1391px;top:638.0px" width="6" height="9" viewBox="0 0 6 9"><path d="M0.5,0.5 L4.5,4.5 L0.5,8.5" fill="none" stroke="#a8a8a8" stroke-width="1.1"/></svg>
<svg style="left:1402px;top:636.5px" width="15" height="12" viewBox="0 0 15 12"><path d="M0.5,11.5 L0.5,1 L5,1 L6.5,2.5 L14.5,2.5 L14.5,11.5 Z" fill="#d6d6d6"/></svg>
<div class="t" style="left:1428px;top:637.5px;font-size:12px;color:#e8e8e8;--w:30.5;transform:scaleX(0.9726);">eyelid</div>
<div class="a" style="left:1340px;top:679px;width:269px;height:1px;background:#474747;"></div>
<div class="a" style="left:1369px;top:655px;width:1px;height:24px;background:#4c4c4c;"></div>
<svg style="left:1348px;top:662.5px" width="14" height="10" viewBox="0 0 14 10"><path d="M0.5,5 C3,1 11,1 13.5,5 C11,9 3,9 0.5,5 Z" fill="#e0e0e0"/><circle cx="7" cy="5" r="2.6" fill="#535353"/><circle cx="7" cy="5" r="1.4" fill="#e0e0e0"/></svg>
<svg style="left:1391px;top:663.0px" width="6" height="9" viewBox="0 0 6 9"><path d="M0.5,0.5 L4.5,4.5 L0.5,8.5" fill="none" stroke="#a8a8a8" stroke-width="1.1"/></svg>
<svg style="left:1402px;top:661.5px" width="15" height="12" viewBox="0 0 15 12"><path d="M0.5,11.5 L0.5,1 L5,1 L6.5,2.5 L14.5,2.5 L14.5,11.5 Z" fill="#d6d6d6"/></svg>
<div class="t" style="left:1428px;top:662.5px;font-size:12px;color:#e8e8e8;--w:44;transform:scaleX(0.9700);">eyebrow</div>
<div class="a" style="left:1340px;top:704px;width:269px;height:1px;background:#474747;"></div>
<div class="a" style="left:1369px;top:680px;width:1px;height:24px;background:#4c4c4c;"></div>
<svg style="left:1348px;top:687.5px" width="14" height="10" viewBox="0 0 14 10"><path d="M0.5,5 C3,1 11,1 13.5,5 C11,9 3,9 0.5,5 Z" fill="#e0e0e0"/><circle cx="7" cy="5" r="2.6" fill="#535353"/><circle cx="7" cy="5" r="1.4" fill="#e0e0e0"/></svg>
<svg style="left:1391px;top:688.0px" width="6" height="9" viewBox="0 0 6 9"><path d="M0.5,0.5 L4.5,4.5 L0.5,8.5" fill="none" stroke="#a8a8a8" stroke-width="1.1"/></svg>
<svg style="left:1402px;top:686.5px" width="15" height="12" viewBox="0 0 15 12"><path d="M0.5,11.5 L0.5,1 L5,1 L6.5,2.5 L14.5,2.5 L14.5,11.5 Z" fill="#d6d6d6"/></svg>
<div class="t" style="left:1428px;top:687.5px;font-size:12px;color:#e8e8e8;--w:18;transform:scaleX(0.9298);">eye</div>
<div class="a" style="left:1340px;top:745px;width:269px;height:1px;background:#474747;"></div>
<div class="a" style="left:1369px;top:705px;width:1px;height:40px;background:#4c4c4c;"></div>
<svg style="left:1348px;top:720.5px" width="14" height="10" viewBox="0 0 14 10"><path d="M0.5,5 C3,1 11,1 13.5,5 C11,9 3,9 0.5,5 Z" fill="#e0e0e0"/><circle cx="7" cy="5" r="2.6" fill="#535353"/><circle cx="7" cy="5" r="1.4" fill="#e0e0e0"/></svg>
<div class="a" style="left:1390px;top:710px;width:26px;height:32px;border:1px solid #1e1e1e;background-color:#fff;background-image:repeating-conic-gradient(#cbcbcb 0 25%,#fff 0 50%);background-size:8px 8px;background-position:1px 1px"></div>
<div class="t" style="left:1426px;top:720.5px;font-size:12px;color:#e8e8e8;--w:25;transform:scaleX(0.9604);">nose</div>
<svg style="left:1582px;top:719.5px" width="11" height="13" viewBox="0 0 11 13"><path d="M2.8,5.5 L2.8,3.8 C2.8,1 8.2,1 8.2,3.8 L8.2,5.5" fill="none" stroke="#d6d6d6" stroke-width="1.2"/><rect x="0.8" y="5.5" width="9.4" height="6.8" fill="none" stroke="#d6d6d6" stroke-width="1.2"/><rect x="4.7" y="8.2" width="1.6" height="1.6" fill="#d6d6d6"/></svg>
<div class="a" style="left:1340px;top:770px;width:269px;height:1px;background:#474747;"></div>
<div class="a" style="left:1369px;top:746px;width:1px;height:24px;background:#4c4c4c;"></div>
<svg style="left:1348px;top:753.5px" width="14" height="10" viewBox="0 0 14 10"><path d="M0.5,5 C3,1 11,1 13.5,5 C11,9 3,9 0.5,5 Z" fill="#e0e0e0"/><circle cx="7" cy="5" r="2.6" fill="#535353"/><circle cx="7" cy="5" r="1.4" fill="#e0e0e0"/></svg>
<svg style="left:1391px;top:754.0px" width="6" height="9" viewBox="0 0 6 9"><path d="M0.5,0.5 L4.5,4.5 L0.5,8.5" fill="none" stroke="#a8a8a8" stroke-width="1.1"/></svg>
<svg style="left:1402px;top:752.5px" width="15" height="12" viewBox="0 0 15 12"><path d="M0.5,11.5 L0.5,1 L5,1 L6.5,2.5 L14.5,2.5 L14.5,11.5 Z" fill="#d6d6d6"/></svg>
<div class="t" style="left:1428px;top:753.5px;font-size:12px;color:#e8e8e8;--w:31.7;transform:scaleX(0.9503);">mouth</div>
<div class="a" style="left:1340px;top:811px;width:269px;height:1px;background:#474747;"></div>
<div class="a" style="left:1369px;top:771px;width:1px;height:40px;background:#4c4c4c;"></div>
<svg style="left:1348px;top:786.5px" width="14" height="10" viewBox="0 0 14 10"><path d="M0.5,5 C3,1 11,1 13.5,5 C11,9 3,9 0.5,5 Z" fill="#e0e0e0"/><circle cx="7" cy="5" r="2.6" fill="#535353"/><circle cx="7" cy="5" r="1.4" fill="#e0e0e0"/></svg>
<div class="a" style="left:1390px;top:776px;width:26px;height:32px;border:1px solid #1e1e1e;background-color:#fff;background-image:repeating-conic-gradient(#cbcbcb 0 25%,#fff 0 50%);background-size:8px 8px;background-position:1px 1px"></div>
<div class="t" style="left:1426px;top:786.5px;font-size:12px;color:#e8e8e8;--w:52;transform:scaleX(0.9283);">whisker_R</div>
<svg style="left:1582px;top:785.5px" width="11" height="13" viewBox="0 0 11 13"><path d="M2.8,5.5 L2.8,3.8 C2.8,1 8.2,1 8.2,3.8 L8.2,5.5" fill="none" stroke="#d6d6d6" stroke-width="1.2"/><rect x="0.8" y="5.5" width="9.4" height="6.8" fill="none" stroke="#d6d6d6" stroke-width="1.2"/><rect x="4.7" y="8.2" width="1.6" height="1.6" fill="#d6d6d6"/></svg>
<div class="a" style="left:1340px;top:852px;width:269px;height:1px;background:#474747;"></div>
<div class="a" style="left:1369px;top:812px;width:1px;height:40px;background:#4c4c4c;"></div>
<svg style="left:1348px;top:827.5px" width="14" height="10" viewBox="0 0 14 10"><path d="M0.5,5 C3,1 11,1 13.5,5 C11,9 3,9 0.5,5 Z" fill="#e0e0e0"/><circle cx="7" cy="5" r="2.6" fill="#535353"/><circle cx="7" cy="5" r="1.4" fill="#e0e0e0"/></svg>
<div class="a" style="left:1390px;top:817px;width:26px;height:32px;border:1px solid #1e1e1e;background-color:#fff;background-image:repeating-conic-gradient(#cbcbcb 0 25%,#fff 0 50%);background-size:8px 8px;background-position:1px 1px"></div>
<div class="t" style="left:1426px;top:827.5px;font-size:12px;color:#e8e8e8;--w:51;transform:scaleX(0.9439);">whisker_L</div>
<svg style="left:1582px;top:826.5px" width="11" height="13" viewBox="0 0 11 13"><path d="M2.8,5.5 L2.8,3.8 C2.8,1 8.2,1 8.2,3.8 L8.2,5.5" fill="none" stroke="#d6d6d6" stroke-width="1.2"/><rect x="0.8" y="5.5" width="9.4" height="6.8" fill="none" stroke="#d6d6d6" stroke-width="1.2"/><rect x="4.7" y="8.2" width="1.6" height="1.6" fill="#d6d6d6"/></svg>
<div class="a" style="left:1340px;top:881px;width:269px;height:1px;background:#474747;"></div>
<div class="a" style="left:1369px;top:853px;width:1px;height:28px;background:#4c4c4c;"></div>
<svg style="left:1348px;top:870px" width="14" height="10" viewBox="0 0 14 10"><path d="M0.5,5 C3,1 11,1 13.5,5 C11,9 3,9 0.5,5 Z" fill="#e0e0e0"/><circle cx="7" cy="5" r="2.6" fill="#535353"/><circle cx="7" cy="5" r="1.4" fill="#e0e0e0"/></svg>
<div class="a" style="left:1390px;top:858px;width:26px;height:32px;border:1px solid #1e1e1e;background-color:#fff;background-image:repeating-conic-gradient(#cbcbcb 0 25%,#fff 0 50%);background-size:8px 8px;background-position:1px 1px"></div>
<div class="t" style="left:1426px;top:870.0px;font-size:12px;color:#e8e8e8;--w:24.5;transform:scaleX(0.9175);">head</div>
<div class="a" style="left:1340px;top:882px;width:285px;height:24px;background:#535353;"></div>
<div class="a" style="left:1340px;top:882px;width:285px;height:1px;background:#3e3e3e;"></div>
<svg style="left:1396px;top:866px" width="14" height="10" viewBox="0 0 14 10"><ellipse cx="7" cy="5" rx="6" ry="4" fill="#fdfaf0"/><path d="M9,7 L13,6" stroke="#c8b0d8" stroke-width="1.5"/></svg>
<svg style="left:1423px;top:889px" width="15" height="10" viewBox="0 0 15 10"><path d="M5,2 L3,2 C1,2 0.8,3.5 0.8,5 C0.8,6.5 1,8 3,8 L5,8 M10,2 L12,2 C14,2 14.2,3.5 14.2,5 C14.2,6.5 14,8 12,8 L10,8 M4.5,5 L10.5,5" fill="none" stroke="#8a8a8a" stroke-width="1.4"/></svg>
<div class="t" style="left:1451px;top:888.0px;font-size:13px;color:#d8d8d8;--w:14;transform:scaleX(1.4908);font-family:'Liberation Serif',serif"><i>fx</i></div>
<svg style="left:1463px;top:900px" width="4" height="3" viewBox="0 0 4 3"><path d="M0,0 L4,0 L2,3 Z" fill="#e0e0e0"/></svg>
<svg style="left:1477px;top:888px" width="14" height="11" viewBox="0 0 14 11"><rect x="0" y="0" width="14" height="11" fill="#dcdcdc"/><circle cx="7" cy="5.5" r="3.3" fill="#535353"/></svg>
<svg style="left:1505px;top:888px" width="13" height="13" viewBox="0 0 13 13"><circle cx="6.5" cy="6.5" r="5.6" fill="none" stroke="#cfcfcf" stroke-width="1.4"/><path d="M10.5,2.5 A5.6,5.6 0 0 1 2.5,10.5 Z" fill="#cfcfcf"/></svg>
<svg style="left:1516px;top:900px" width="4" height="3" viewBox="0 0 4 3"><path d="M0,0 L4,0 L2,3 Z" fill="#e0e0e0"/></svg>
<svg style="left:1531px;top:888px" width="15" height="12" viewBox="0 0 15 12"><path d="M0.5,11.5 L0.5,1 L5,1 L6.5,2.5 L14.5,2.5 L14.5,11.5 Z" fill="#d6d6d6"/></svg>
<svg style="left:1559px;top:888px" width="13" height="13" viewBox="0 0 13 13"><rect x="0.6" y="0.6" width="11.8" height="11.8" fill="none" stroke="#d8d8d8" stroke-width="1.2"/><path d="M6.5,3 L6.5,10 M3,6.5 L10,6.5" stroke="#d8d8d8" stroke-width="1.3"/></svg>
<svg style="left:1585px;top:887px" width="12" height="14" viewBox="0 0 12 14"><path d="M0.5,2.5 L11.5,2.5 M4,2.5 L4,0.8 L8,0.8 L8,2.5 M1.8,3 L2.5,13.3 L9.5,13.3 L10.2,3 M4.5,5 L4.5,11.5 M7.5,5 L7.5,11.5" fill="none" stroke="#d8d8d8" stroke-width="1.1"/></svg>
<svg style="left:288px;top:114px" width="632" height="759" viewBox="288 114 632 759">
<defs><pattern id="chk" x="288" y="114" width="16" height="16" patternUnits="userSpaceOnUse">
<rect width="16" height="16" fill="#fff"/><rect x="8" width="8" height="8" fill="#cbcbcb"/><rect y="8" width="8" height="8" fill="#cbcbcb"/>
</pattern></defs>
<rect x="288" y="114" width="632" height="759" fill="url(#chk)" shape-rendering="crispEdges"/>
<!--CAT-->
<defs>
<radialGradient id="headG" gradientUnits="userSpaceOnUse" cx="0" cy="0" r="1" gradientTransform="translate(470 330) scale(300 190)">
<stop offset="0.68" stop-color="#fffcef"/><stop offset="0.85" stop-color="#e8e0ee"/><stop offset="1" stop-color="#d5cae5"/>
</radialGradient>
<radialGradient id="earL" gradientUnits="userSpaceOnUse" cx="0" cy="0" r="1" gradientTransform="translate(558 248) rotate(55.7) scale(100 44)">
<stop offset="0" stop-color="#d4cae5"/><stop offset="0.45" stop-color="#ddd4e9"/><stop offset="1" stop-color="#fffcef"/>
</radialGradient>
<linearGradient id="earR" gradientUnits="userSpaceOnUse" x1="700" y1="260" x2="742" y2="320">
<stop offset="0" stop-color="#fffcef"/><stop offset="0.5" stop-color="#f2edf1"/><stop offset="1" stop-color="#d6cde6"/>
</linearGradient>
<linearGradient id="tailG" gradientUnits="userSpaceOnUse" x1="675" y1="690" x2="770" y2="730">
<stop offset="0" stop-color="#d6cde6"/><stop offset="0.65" stop-color="#fdfbf0"/><stop offset="1" stop-color="#fffcef"/>
</linearGradient>
<linearGradient id="legG" gradientUnits="userSpaceOnUse" x1="0" y1="752" x2="0" y2="795">
<stop offset="0" stop-color="#d6cde6"/><stop offset="1" stop-color="#fffcef"/>
</linearGradient>
<linearGradient id="dressG" gradientUnits="userSpaceOnUse" x1="0" y1="510" x2="0" y2="690">
<stop offset="0" stop-color="#4878a2"/><stop offset="0.35" stop-color="#4a86a4"/><stop offset="0.72" stop-color="#51a09f"/><stop offset="1" stop-color="#55a9a0"/>
</linearGradient>
<linearGradient id="sleeveG" gradientUnits="userSpaceOnUse" x1="505" y1="520" x2="455" y2="585">
<stop offset="0" stop-color="#03305a"/><stop offset="1" stop-color="#04495b"/>
</linearGradient>
<linearGradient id="sleeveGR" gradientUnits="userSpaceOnUse" x1="625" y1="525" x2="690" y2="590">
<stop offset="0" stop-color="#03305a"/><stop offset="0.6" stop-color="#04485b"/><stop offset="1" stop-color="#034a5a"/>
</linearGradient>
<linearGradient id="pinkR" gradientUnits="userSpaceOnUse" x1="670" y1="290" x2="705" y2="355">
<stop offset="0" stop-color="#f4a6c0"/><stop offset="1" stop-color="#d788b1"/>
</linearGradient>
<clipPath id="eyeLc"><path d="M449,398 C450,380 458,364 472,358 L476,347 C492,350 503,372 503,396 C503,420 494,440 478,440 C460,440 449,422 449,398 Z"/></clipPath>
<clipPath id="eyeRc"><path d="M582.7,413 C583,395 594,377 613.7,369 L615,359 C640,360 656,385 656,411 C656,435 640,454 617,454 C597,454 583,436 582.7,413 Z"/></clipPath>
<filter id="blur1" x="-20%" y="-20%" width="140%" height="140%"><feGaussianBlur stdDeviation="1.2"/></filter>
<filter id="crayon" x="-20%" y="-20%" width="140%" height="140%"><feGaussianBlur in="SourceGraphic" stdDeviation="1.5" result="b"/><feTurbulence type="fractalNoise" baseFrequency="0.9 0.25" numOctaves="2" seed="3" result="n"/><feColorMatrix in="n" type="matrix" values="0 0 0 0 0  0 0 0 0 0  0 0 0 0 0  0 0 0 -1.7 1.65" result="m"/><feComposite in="b" in2="m" operator="in"/></filter>
</defs>
<g stroke="#111111" stroke-width="3" stroke-linejoin="round" stroke-linecap="round">
<!-- tail -->
<path fill="url(#tailG)" d="M650,652 C668,670 695,693 724,697 C752,700 770,680 790,665 C810,652 836,658 845,678 C853,700 842,724 818,744 C792,763 752,770 716,763 C692,757 676,748 664,736 Z"/>
<!-- legs -->
<path fill="url(#legG)" d="M514,742 L536,816 C530,830 536,841 555,844 C574,845 590,839 591,828 C592,815 590,800 588,788 L577,742 Z"/>
<path fill="url(#legG)" d="M606,745 L650,830 C656,840 668,843 680,840 C694,836 703,827 699,816 C696,808 690,804 686,802 L664,732 Z"/>
<!-- hands -->
<path fill="#fffcef" d="M430,562 C408,570 391,578 386,595 C382,612 389,625 401,630 C414,635 432,632 447,612 Z"/>
<path fill="#fffcef" d="M730,558 C752,566 770,580 776,596 C780,612 772,625 760,630 C745,636 732,633 722,628 C712,621 706,614 700,606 Z"/>
<!-- sleeves -->
<path fill="url(#sleeveG)" d="M518,510 L427,553 L433,596 L469,621 L503,600 L512,540 Z"/>
<path fill="url(#sleeveGR)" d="M613,510 L736,560 L695,619 L624,604 L612,600 L605,546 Z"/>
<!-- dress -->
<path fill="url(#dressG)" d="M516,510 C513,530 505,570 500,600 C496,630 492,670 492,700 L495,737 C505,745 540,750 578,750 C600,752 640,745 661,739 L690,706 L672,673 L658,661 C650,645 642,630 640,612 L614,602 C608,575 605,546 615,511 L607,504 L586,498 L534,498 Z"/>
<!-- neck -->
<path fill="#02305a" stroke="none" d="M533,498 L534,505 C537,524 549,530 556,530 C572,530 582,520 586,505 L587,498 Z"/>
<path fill="none" stroke-width="2.4" d="M534,506 C537,524 549,530 556,530 C572,530 582,520 586,506"/>
<path fill="none" stroke-width="1.8" d="M527,518 C534,533 546,540 556,540 C572,540 584,530 590,517"/>
<!-- dress details -->
<path fill="none" stroke-width="2" d="M541,675 L561,686 L577,750"/>
<path fill="none" stroke-width="2" d="M500,719 C515,724 530,728 544,728"/>
<path fill="none" stroke-width="2" d="M581,727 C605,727 635,720 655,709"/>
<!-- paw print -->
<g fill="#e07098" stroke="none">
<path d="M530,598 C530,585 540,582 551,582 C565,582 574,588 574,600 C574,612 563,617 551,617 C538,617 530,610 530,598 Z"/>
<ellipse cx="524" cy="582" rx="9" ry="10" transform="rotate(-20 524 582)"/>
<ellipse cx="552" cy="569" rx="11" ry="8"/>
<ellipse cx="577" cy="580" rx="9" ry="10" transform="rotate(20 577 580)"/>
</g>
<!-- toe lines -->
<path fill="none" stroke-width="1.5" d="M546,826 L547,838 M563,829 L563,840 M683,828 L686,838 M697,820 L700,830 M390,609 L392,616 M400,622 L402,628 M756,611 L758,622 M772,598 L775,610"/>
<!-- ears -->
<path fill="url(#earL)" d="M436,322 C436,280 450,205 484,157 C488,152 492,153 495,157 C515,175 545,222 570,272 L520,300 L445,316 Z"/>
<path fill="url(#earR)" d="M600,280 C640,240 690,205 730,198 C742,197 747,208 747,222 C748,270 740,330 721,384 L660,330 Z"/>
<!-- head -->
<path fill="url(#headG)" stroke="none" d="M445,316 C460,300 490,280 545,272 C580,270 620,285 660,310 C690,335 710,360 721,384 C730,390 740,392 746,399 C740,408 730,415 721,420 L749,421 C746,430 738,442 729,451 C718,462 706,468 690,476 C675,482 665,487 650,491 C620,499 590,502 556,502 C520,502 480,492 457,482 C440,474 428,462 421,453 C412,443 400,434 389,423 C388,420 387,417 386.7,415.2 L396.4,412.2 L408,405 C400,400 392,392 382,383 C396,383 407,378 413,371 C419,362 425,345 431,334 C435,327 440,320 445,316 Z"/>
<path fill="none" d="M721,384 C730,390 740,392 746,399 C740,408 730,415 721,420 L749,421 C746,430 738,442 729,451 C718,462 706,468 690,476 C675,482 665,487 650,491 C620,499 590,502 556,502 C520,502 480,492 457,482 C440,474 428,462 421,453 C412,443 400,434 389,423 C388,420 387,417 386.7,415.2 L396.4,412.2 L408,405 C400,400 392,392 382,383 C396,383 407,378 413,371 C419,362 425,345 431,334 C435,327 440,320 445,316"/>
<path fill="none" d="M470,292 C495,280 530,272 560,272 C585,273 605,280 622,290"/>
<path fill="none" stroke-width="2.4" d="M674,334 C690,348 708,365 721,384"/>
<!-- pink inner ears -->
<path fill="#f5a6b9" stroke="none" d="M466,232 C476,248 482,268 483,284 C470,292 458,302 451,311 C450,280 455,250 466,232 Z"/>
<path fill="url(#pinkR)" stroke="none" d="M658,314 C675,298 690,285 702,282 C709,300 710,330 706,360 C695,348 682,336 674,334 C668,326 662,320 658,314 Z"/>
<!-- cheek inner line -->
<path fill="none" stroke-width="1.8" d="M422.5,371.5 C421.5,385 420.5,400 418.3,413.4 C416,422 413,430 412,441"/>
<!-- blush -->
<ellipse cx="434" cy="440" rx="18" ry="15" fill="#fb9fb2" stroke="none" opacity="0.95" filter="url(#crayon)"/>
<ellipse cx="667" cy="457" rx="24" ry="17" fill="#e584a6" stroke="none" opacity="0.95" filter="url(#crayon)"/>
<!-- eyes -->
<path fill="#000" stroke="none" d="M449,398 C450,380 458,364 472,358 L476,347 C492,350 503,372 503,396 C503,420 494,440 478,440 C460,440 449,422 449,398 Z"/>
<g clip-path="url(#eyeLc)"><ellipse cx="468" cy="443" rx="34" ry="33" transform="rotate(20 468 443)" fill="#5ccab9" stroke="none"/></g>
<path fill="#000" stroke="none" d="M437.5,401 C437,380 444,360 457,351 C466,345 478,344 487,349 L472,358 C462,356 452,361 446,370 C440,380 438,390 437.5,401 Z"/>
<path fill="#000" stroke="none" d="M582.7,413 C583,395 594,377 613.7,369 L615,359 C640,360 656,385 656,411 C656,435 640,454 617,454 C597,454 583,436 582.7,413 Z"/>
<g clip-path="url(#eyeRc)"><ellipse cx="613" cy="458" rx="41" ry="36" transform="rotate(15 613 458)" fill="#5ccab9" stroke="none"/></g>
<path fill="#000" stroke="none" d="M575.5,395 C578,380 590,365 606,360 C616,357 626,358 634,364 L613.7,369 C603,370 593,377 587,385 C581,390 577,393 575.5,395 Z"/>
<!-- nose, mouth, brows -->
<path fill="#111" stroke="none" d="M521,432 L527,432 L524,436 Z"/>
<path fill="none" stroke-width="2.3" d="M512,459 C518,465 528,466 535,459 C542,466 558,466 569,460"/>
<path fill="#111" stroke="none" d="M509,325 C512,327 515,331 515,335 C512,333 509,329 509,325 Z M564,331 C563,335 561,338 558,340 C558,336 560,333 564,331 Z"/>
<!-- whiskers -->
<path fill="none" stroke-width="1.5" d="M365,413 L422,423 M373,447 L418,436 M703,435 L769,432 M701,449 L753,465"/>
</g>
<!--/CAT-->

</svg>
<script>
(function(){var els=document.querySelectorAll('.t');for(var i=0;i<els.length;i++){var e=els[i];var w=parseFloat(getComputedStyle(e).getPropertyValue('--w'));if(w>0){var t0=e.style.transform;e.style.transform='none';var n=e.getBoundingClientRect().width;e.style.transform=(n>0)?'scaleX('+(w/n).toFixed(4)+')':t0;}}})();
</script>
</body></html>
